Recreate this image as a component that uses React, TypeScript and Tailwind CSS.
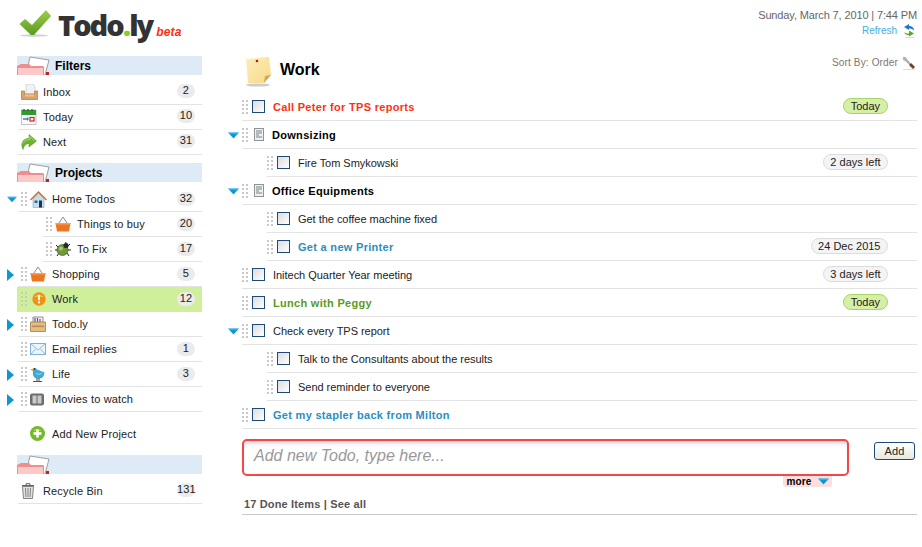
import React from "react";

const Grip = () => (
  <svg width="7" height="14" viewBox="0 0 7 14" className="shrink-0">
    {[0, 4, 8, 12].map((y) => (
      <g key={y} fill="#c8c8c8">
        <rect x="0" y={y} width="2" height="2" />
        <rect x="4" y={y} width="2" height="2" />
      </g>
    ))}
  </svg>
);

const ArrowDown = () => (
  <svg width="11" height="7" viewBox="0 0 11 7"><path d="M0 0.5h11L5.5 6.5z" fill="#0d96d6" /><path d="M1.5 1h8" stroke="#6cc6ee" /></svg>
);
const ArrowRight = () => (
  <svg width="7" height="12" viewBox="0 0 7 12"><path d="M0 0l7 6-7 6z" fill="#0d96d6" /></svg>
);

const Folder = () => (
  <svg width="34" height="19" viewBox="0 0 34 19" className="shrink-0">
    <path d="M13 1l19 3-4 15H9z" fill="#fff" stroke="#8a8a8a" strokeWidth="0.8" />
    <path d="M0 10l4-2h8l2 2h12q1 0 1 2v7H0z" fill="#ee8e8e" />
    <path d="M1 12h25v7H1z" fill="#fcc8c8" />
    <rect x="29" y="16" width="3" height="3" fill="#c81e1e" />
  </svg>
);

const Inbox = () => (
  <svg width="17" height="17" viewBox="0 0 17 17">
    <path d="M5 0h7l2 2v8H5z" fill="#f0f3f6" stroke="#b9c2c9" strokeWidth="0.6" />
    <path d="M0.5 7h3v3h10V7h3v8.5h-16z" fill="#d8a26a" stroke="#a97b46" strokeWidth="0.7" />
    <rect x="4" y="10.5" width="9" height="2" fill="#eec394" />
  </svg>
);
const Calendar = () => (
  <svg width="16" height="16" viewBox="0 0 16 16">
    <rect x="0.5" y="1" width="14.5" height="14.5" fill="#fbfbfb" stroke="#aaa" strokeWidth="0.7" />
    <rect x="0.5" y="1" width="14.5" height="5" fill="#2f9a2f" />
    <path d="M3 0v2M7 0v2M11 0v2" stroke="#333" />
    <path d="M2 10h5" stroke="#2d78c8" strokeWidth="1.4" />
    <path d="M6 8l2 2-2 2z" fill="#2d78c8" />
    <rect x="9" y="8.5" width="4" height="3.5" fill="#fff" stroke="#d01c1c" strokeWidth="1.2" />
  </svg>
);
const NextIcon = () => (
  <svg width="16" height="16" viewBox="0 0 16 16">
    <path d="M2 15.5C-1 9 2 4.5 8 4.5V0.5l7.5 6.5L8 13V9.5c-3 0-5 2-6 6z" fill="#6cb32e" stroke="#4f8f1c" strokeWidth="0.5" />
    <path d="M1.5 9.5C3 6.5 6 5.5 9 5.5V2.5L13.5 7" fill="none" stroke="#a6dc6a" />
  </svg>
);
const House = () => (
  <svg width="17" height="17" viewBox="0 0 17 17">
    <path d="M3 8v8.5h11V8L8.5 2.5z" fill="#bfe0f2" stroke="#7aa6c2" strokeWidth="0.6" />
    <path d="M0.5 9L8.5 1l8 8" fill="none" stroke="#c8702e" strokeWidth="1.4" />
    <rect x="9" y="9.5" width="3" height="7" fill="#26323a" />
    <rect x="4.5" y="9.5" width="3" height="2.5" fill="#45647a" />
  </svg>
);
const Basket = () => (
  <svg width="16" height="16" viewBox="0 0 16 16">
    <path d="M4 7L8 1l4 6" fill="none" stroke="#8d8d8d" strokeWidth="1" />
    <path d="M0.5 7h15l-1.5 8.5H2z" fill="#ee7420" />
    <rect x="0.5" y="7" width="15" height="1.5" fill="#f7a05c" />
  </svg>
);
const Bug = () => (
  <svg width="16" height="16" viewBox="0 0 16 16">
    <path d="M1 4l3 3M15 3l-3 3M0 9h3M13 9h3M2 15l2-3M14 15l-2-3M11 1l-1 3" stroke="#222" strokeWidth="1" />
    <circle cx="7.5" cy="9" r="5.5" fill="#6f9a3a" stroke="#3f5f1f" strokeWidth="0.7" />
    <circle cx="6" cy="7.5" r="2" fill="#a6c974" />
    <circle cx="11" cy="4.5" r="2.6" fill="#2a2a2a" />
  </svg>
);
const Warn = () => (
  <svg width="14" height="14" viewBox="0 0 14 14">
    <circle cx="7" cy="7" r="6.7" fill="#f29111" />
    <path d="M2 5a5.5 4 0 0 1 10 0z" fill="#f9b84a" />
    <rect x="6" y="2.8" width="2" height="5.5" fill="#fff" />
    <rect x="6" y="9.3" width="2" height="2" fill="#fff" />
  </svg>
);
const Crate = () => (
  <svg width="16" height="16" viewBox="0 0 16 16">
    <path d="M3 1h10v8H3z" fill="#f4f2ee" stroke="#666" strokeWidth="0.7" />
    <path d="M5 7V2M7.5 7V2M10 7V3" stroke="#6b4e9b" strokeWidth="1.2" />
    <path d="M0.5 6h15l0 9.5H0.5z" fill="#e4bd84" stroke="#a07b45" strokeWidth="0.8" />
    <rect x="2" y="9.5" width="12" height="1.6" fill="#b58c54" />
  </svg>
);
const Mail = () => (
  <svg width="16" height="12" viewBox="0 0 16 12">
    <rect x="0.5" y="0.5" width="15" height="11" fill="#eaf4fb" stroke="#7fb2d6" />
    <path d="M0.5 0.5L8 7l7.5-6.5M0.5 11.5L6 5.5M15.5 11.5L10 5.5" fill="none" stroke="#8fbcdc" />
  </svg>
);
const BirdIcon = () => (
  <svg width="15" height="16" viewBox="0 0 15 16">
    <path d="M2.5 3.5q2-3.500 4.500 0l7.500 3q-.5 6-5.500 6H6Q2 10 3 6z" fill="#3fa9d8" />
    <path d="M0 3.500L3 2.500v2.500z" fill="#f0b020" />
    <circle cx="4.600" cy="3" r="0.8" fill="#111" />
    <path d="M6 7.500q3 1.500 6 0" stroke="#9ad6ef" fill="none" />
    <path d="M7 12v3M9 12v3M3 15.500h9" stroke="#555" />
  </svg>
);
const Film = () => (
  <svg width="14" height="13" viewBox="0 0 14 13">
    <rect x="0" y="0.5" width="14" height="12" rx="2" fill="#6d6d6d" />
    <rect x="2.5" y="2.5" width="4" height="8" fill="#c9c9c9" />
    <rect x="7.5" y="2.5" width="4" height="8" fill="#c9c9c9" />
  </svg>
);
const Plus = () => (
  <svg width="15" height="15" viewBox="0 0 15 15">
    <circle cx="7.5" cy="7.5" r="7.5" fill="#76b82a" />
    <path d="M3 5a5 4 0 0 1 9 0z" fill="#9ad14f" />
    <rect x="3.5" y="6.2" width="8" height="2.6" fill="#fff" />
    <rect x="6.2" y="3.5" width="2.6" height="8" fill="#fff" />
  </svg>
);
const Trash = () => (
  <svg width="14" height="16" viewBox="0 0 14 16">
    <path d="M1 2.5h12M5 2V0.7h4V2" fill="none" stroke="#666" strokeWidth="1" />
    <path d="M1.5 3.5h11l-1 12h-9z" fill="#e2e2e2" stroke="#666" strokeWidth="0.8" />
    <path d="M4.5 5l.4 9M7 5v9M9.5 5l-.4 9" stroke="#777" strokeWidth="0.9" />
  </svg>
);
const NoteDoc = () => (
  <svg width="10" height="13" viewBox="0 0 10 13">
    <rect x="0.5" y="0.5" width="9" height="12" fill="#eef0f2" stroke="#8d9499" />
    <path d="M2 3h6M2 5h6M2 7h3M2 9h6" stroke="#7b8287" />
  </svg>
);
const Sticky = () => (
  <svg width="27" height="31" viewBox="0 0 27 31">
    <defs>
      <linearGradient id="st" x1="0" y1="0" x2="1" y2="1">
        <stop offset="0" stopColor="#fdeeb8" />
        <stop offset="1" stopColor="#f9d88a" />
      </linearGradient>
    </defs>
    <ellipse cx="13" cy="29" rx="12" ry="1.6" fill="#ccc" />
    <path d="M1 3l23-2 2 18-7 8H3z" fill="url(#st)" />
    <path d="M19 27l1-7 6-1z" fill="#d3a75a" />
    <circle cx="12" cy="5" r="1.3" fill="#a81e1e" />
  </svg>
);
const RefreshIcon = () => (
  <svg width="12" height="14" viewBox="0 0 12 14">
    <path d="M6 0L1 3l5 3V4.500c2 0 3.500.5 5 2 0-3-2-4.500-5-4.500z" fill="#1b7cc0" />
    <path d="M6 6.500l5 3-5 3V11c-2 0-4-.5-5-2.500 1 .5 3 1 5 1z" fill="#5aa82c" />
    <rect x="2" y="13" width="9" height="1" fill="#ddd" />
  </svg>
);
const Wrench = () => (
  <svg width="14" height="14" viewBox="0 0 14 14">
    <path d="M1 1q-1 3 2 4l3 2 1-1-2-3Q4 0 1 1z" fill="#b5b5b5" />
    <path d="M5 5l3 3" stroke="#aaa" strokeWidth="2" />
    <path d="M8 8l4 4" stroke="#70402e" strokeWidth="3" />
    <rect x="1" y="13" width="12" height="1" fill="#ddd" />
  </svg>
);
const Check = () => (
  <svg width="33" height="28" viewBox="0 0 33 28">
    <defs>
      <linearGradient id="ck" x1="0" y1="0" x2="0" y2="1">
        <stop offset="0" stopColor="#9ccf4a" />
        <stop offset="1" stopColor="#5c9a22" />
      </linearGradient>
    </defs>
    <ellipse cx="15" cy="26.5" rx="14" ry="1.2" fill="#cfcfcf" />
    <path d="M0.5 15L6 10l7 6L27 1l5 6-17 19h-3z" fill="url(#ck)" />
  </svg>
);

const Badge = ({ n, lift }: { n: number; lift?: boolean }) => (
  <span className={lift
    ? "w-[18px] h-[14px] mb-[2px] rounded-full bg-[#ebebeb] text-[11px] leading-[13px] text-center text-[#222] shrink-0 mr-[7px]"
    : "w-[18px] h-[14px] rounded-full bg-[#ebebeb] text-[11px] leading-[13px] text-center text-[#222] shrink-0 mr-[7px]"}>{n}</span>
);

type Side = { label: string; n?: number; icon: React.ReactNode; arrow?: "d" | "r"; sub?: boolean; active?: boolean };

const Gutter = ({ arrow }: { arrow?: "d" | "r" }) => (
  <div className="w-[17px] flex items-center pl-[7px] shrink-0">
    {arrow === "d" && <ArrowDown />}
    {arrow === "r" && <ArrowRight />}
  </div>
);

const FilterRow = ({ label, n, icon }: Side) => (
  <div className="flex items-center h-[25px] ml-[18px] border-b border-[#e3e3e3]">
    <div className="w-[25px] pl-[3px] flex items-center justify-start">{icon}</div>
    <span className="flex-1 text-[#222]">{label}</span>
    {n !== undefined && <Badge n={n} lift />}
  </div>
);

const ProjectRow = ({ label, n, icon, arrow, sub, active }: Side) => (
  <div className="flex h-[25px]">
    <Gutter arrow={arrow} />
    <div className={sub ? "flex flex-1 items-center ml-[26px] pl-[3px] border-b border-[#e3e3e3]" : active ? "flex flex-1 items-center pl-[4px] pb-px bg-[#d0ef9a]" : "flex flex-1 items-center pl-[3px] ml-px border-b border-[#e3e3e3]"}>
      <Grip />
      <div className={active ? "w-[24px] pl-[4px] flex items-center" : "w-[24px] pl-[2px] flex items-center"}>{icon}</div>
      <span className="flex-1 text-[#222]">{label}</span>
      {n !== undefined && <Badge n={n} />}
    </div>
  </div>
);

const SectionHead = ({ label }: { label?: string }) => (
  <div className="flex items-center h-[19px] ml-[17px] bg-[#deeaf5] font-bold text-[12px] tracking-normal text-black gap-[4px] overflow-hidden">
    <Folder />
    {label && <span>{label}</span>}
  </div>
);

type Todo = { label: string; color?: string; sub?: boolean; arrow?: boolean; head?: boolean; pill?: string; green?: boolean };

const todos: Todo[] = [
  { label: "Call Peter for TPS reports", color: "text-[#ff3010] font-bold tracking-[0.3px]", pill: "Today", green: true },
  { label: "Downsizing", head: true, arrow: true, color: "text-black font-bold tracking-[0.3px]" },
  { label: "Fire Tom Smykowski", sub: true, pill: "2 days left" },
  { label: "Office Equipments", head: true, arrow: true, color: "text-black font-bold tracking-[0.3px]" },
  { label: "Get the coffee machine fixed", sub: true },
  { label: "Get a new Printer", sub: true, color: "text-[#2a8fc0] font-bold tracking-[0.3px]", pill: "24 Dec 2015" },
  { label: "Initech Quarter Year meeting", pill: "3 days left" },
  { label: "Lunch with Peggy", color: "text-[#5a9a1c] font-bold tracking-[0.3px]", pill: "Today", green: true },
  { label: "Check every TPS report", arrow: true },
  { label: "Talk to the Consultants about the results", sub: true },
  { label: "Send reminder to everyone", sub: true },
  { label: "Get my stapler back from Milton", color: "text-[#2a8fc0] font-bold tracking-[0.3px]" },
];

const TodoRow = ({ t }: { t: Todo }) => (
  <div className="flex h-[28px]">
    <div className="w-[17px] shrink-0 flex items-center pl-[3px]">{t.arrow && <ArrowDown />}</div>
    <div className={t.sub ? "flex flex-1 items-center ml-[25px] border-b border-[#e3e3e3]" : "flex flex-1 items-center border-b border-[#e3e3e3]"}>
      <Grip />
      {t.head ? (
        <div className="w-[13px] ml-[3px] mr-[7px] flex justify-center"><NoteDoc /></div>
      ) : (
        <span className="w-[13px] h-[13px] ml-[3px] mr-[8px] border border-[#1f4a78] bg-gradient-to-br from-[#dcdcdc] to-white shrink-0" />
      )}
      <span className={"flex-1 " + (t.color ?? "text-[#222] tracking-[-0.03px]")}>{t.label}</span>
      {t.pill && (
        <span className={t.green
          ? "h-[16px] mb-[2px] px-[7px] rounded-full border border-[#a8d468] bg-[#d5f0a6] text-[11px] tracking-normal leading-[14px] text-[#222] mr-[29px]"
          : "h-[16px] mb-[2px] px-[6.5px] rounded-full border border-[#dcdcdc] bg-[#f4f4f4] text-[11px] tracking-normal leading-[14px] text-[#222] mr-[29px]"}>{t.pill}</span>
      )}
    </div>
  </div>
);

export default function App() {
  return (
    <div className="w-[922px] h-[547px] overflow-hidden bg-white text-[11px] leading-[14px] font-['Liberation_Sans',Arial,sans-serif] tracking-[0.15px]">
      <header className="flex justify-between h-[56px]">
        <div className="flex items-start pl-[19px] pt-[9px]">
          <Check />
          <span className="ml-[6px] mt-[1px] text-[29px] leading-[30px] font-extrabold text-[#333] font-['Open_Sans',sans-serif] tracking-[-2px]">Todo<span className="text-[#8ccc2e]">.</span>ly</span>
          <span className="ml-[4px] mt-[16px] text-[12px] leading-[14px] font-bold italic text-[#ff3010]">beta</span>
        </div>
        <div className="flex flex-col items-end pr-[5px] pt-[8px] text-[#666]">
          <span className="tracking-[-0.13px]">Sunday, March 7, 2010 | 7:44 PM</span>
          <div className="flex items-center gap-[6px] mt-[2px] pr-[2px] text-[10px] tracking-normal text-[#44b0e0]"><span>Refresh</span><RefreshIcon /></div>
        </div>
      </header>
      <div className="flex">
        <aside className="w-[202px] shrink-0">
          <SectionHead label="Filters" />
          <div className="h-[5px]" />
          <FilterRow label="Inbox" n={2} icon={<Inbox />} />
          <FilterRow label="Today" n={10} icon={<Calendar />} />
          <FilterRow label="Next" n={31} icon={<NextIcon />} />
          <div className="h-[8px]" />
          <SectionHead label="Projects" />
          <div className="h-[5px]" />
          <ProjectRow label="Home Todos" n={32} icon={<House />} arrow="d" />
          <ProjectRow label="Things to buy" n={20} icon={<Basket />} sub />
          <ProjectRow label="To Fix" n={17} icon={<Bug />} sub />
          <ProjectRow label="Shopping" n={5} icon={<Basket />} arrow="r" />
          <ProjectRow label="Work" n={12} icon={<Warn />} active />
          <ProjectRow label="Todo.ly" icon={<Crate />} arrow="r" />
          <ProjectRow label="Email replies" n={1} icon={<Mail />} />
          <ProjectRow label="Life" n={3} icon={<BirdIcon />} arrow="r" />
          <ProjectRow label="Movies to watch" icon={<Film />} arrow="r" />
          <div className="flex items-center h-[43px] pl-[30px] gap-[7px] text-[#222]">
            <Plus />
            <span>Add New Project</span>
          </div>
          <SectionHead />
          <div className="h-[5px]" />
          <FilterRow label="Recycle Bin" n={131} icon={<Trash />} />
        </aside>
        <main className="flex-1 ml-[23px] mr-[5px]">
          <div className="flex justify-between h-[37px] pl-[17px]">
            <div className="flex items-start pl-[3px] gap-[8px]">
              <Sticky />
              <span className="text-[16px] leading-[28px] font-bold text-black tracking-normal">Work</span>
            </div>
            <div className="flex items-center gap-[4px] h-[14px] pr-px text-[10px] text-[#777]"><span>Sort By: Order</span><Wrench /></div>
          </div>
          {todos.map((t) => (
            <TodoRow key={t.label} t={t} />
          ))}
          <div className="flex items-start pl-[17px] mt-[10px]">
            <div className="flex-1 h-[37px] rounded-[5px] border-2 border-[#f44848] px-[10px] text-[16px] leading-[29px] italic tracking-normal text-[#999] shadow-[inset_0_4px_4px_-2px_rgba(0,0,0,0.18)]">Add new Todo, type here...</div>
            <button className="w-[41px] h-[18px] ml-[25px] mr-[2px] mt-[3px] rounded-[3px] border border-[#1f4a78] bg-gradient-to-b from-white to-[#e8e8e0] text-[#222] text-[11px] leading-[14px]">Add</button>
          </div>
          <div className="flex justify-end pr-[85px]">
            <div className="flex items-center justify-center gap-[6px] w-[49px] h-[11px] rounded-b-[3px] bg-[#fddede] text-[10px] font-bold text-black"><span>more</span><ArrowDown /></div>
          </div>
          <div className="ml-[17px] mt-[10px] pl-[2px] pb-[3px] border-b border-[#c8c8c8] font-bold text-[#555]">17 Done Items | See all</div>
        </main>
      </div>
    </div>
  );
}
